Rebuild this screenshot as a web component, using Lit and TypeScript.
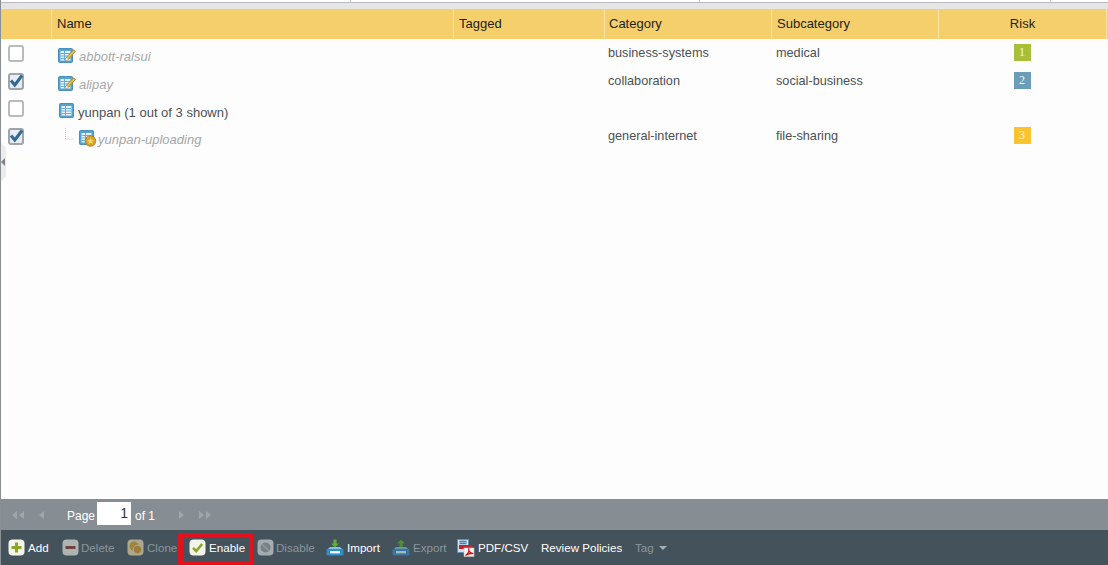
import { LitElement, html, css, svg } from "lit";
import { customElement } from "lit/decorators.js";

const grid = svg`
  <rect x="0.5" y="0.5" width="14" height="14" rx="1" fill="#55a3d3" stroke="#4a8fbc"/>
  <rect x="2.500" y="3" width="10" height="9.500" fill="#e9f4fa"/>
  <path d="M2.500 5.500h10M2.500 8h10M2.500 10.500h10M6.500 3v9.500" stroke="#6aaed8" stroke-width="1"/>`;

const tableIcon = svg`<svg class="ico" width="15" height="15" viewBox="0 0 15 15">${grid}</svg>`;

const editIcon = svg`<svg class="ico" width="18" height="15" viewBox="0 0 18 15">
  ${grid}
  <path d="M15.500 1.800l2 1.600-7.200 8-3 1.300 .8-3z" fill="#e7bd48" stroke="#927327" stroke-width=".7"/>
  <path d="M8.100 9.700l2.200 1.700-3 1.300z" fill="#f6ecd0"/>
</svg>`;

const badgeIcon = svg`<svg class="ico" width="18" height="17" viewBox="0 0 18 17">
  ${grid}
  <circle cx="11.500" cy="11" r="5.300" fill="#d9a128" stroke="#9c7418" stroke-width=".7"/>
  <path d="M11.500 7.600l1 2.300 2.400.2-1.800 1.600.6 2.400-2.200-1.300-2.200 1.300.6-2.400-1.800-1.600 2.400-.2z" fill="#f6d768"/>
</svg>`;

const round = (inner: unknown, dim = false) => svg`<svg class="ico ${dim ? "dim" : ""}" width="17" height="17" viewBox="0 0 17 17">
  <rect x="0.5" y="0.5" width="16" height="16" rx="4" fill="#f4f5ea"/>
  ${inner}
</svg>`;

const addI = round(svg`<path d="M8.500 3.500v10M3.500 8.500h10" stroke="#8aa52c" stroke-width="3"/>`);
const delI = round(svg`<path d="M3.500 8.500h10" stroke="#8f3a34" stroke-width="3"/>`, true);
const cloneI = svg`<svg class="ico dim" width="17" height="17" viewBox="0 0 17 17">
  <rect x="0.5" y="0.5" width="16" height="16" rx="4" fill="#f1e2b4"/>
  <circle cx="7" cy="7" r="4.600" fill="#e0a52c"/><circle cx="10.500" cy="10.500" r="4.200" fill="#d39a26" stroke="#f1e2b4"/>
</svg>`;
const enableI = round(svg`<path d="M4 8.800l3.200 3.200 6-7" fill="none" stroke="#8aa52c" stroke-width="2.600"/>`);
const disableI = svg`<svg class="ico dim" width="17" height="17" viewBox="0 0 17 17">
  <rect x="0.5" y="0.5" width="16" height="16" rx="4" fill="#e6e8e8"/>
  <circle cx="8.500" cy="8.500" r="5" fill="#9aa2a6"/><path d="M5.200 5.200l6.600 6.600" stroke="#c5cacb" stroke-width="1.400"/>
</svg>`;
const ioI = (dim: boolean, up: boolean) => svg`<svg class="ico ${dim ? "dim" : ""}" width="18" height="17" viewBox="0 0 18 17">
  <path d="${up ? "M9 0.500l4 4h-2.400v4H7.400v-4H5z" : "M7.400 0.500h3.200v4H13l-4 4-4-4h2.400z"}" fill="#58b22e"/>
  <path d="M2 10l2-2h10l2 2z" fill="#7fc3e6"/>
  <rect x="0.5" y="10" width="17" height="6.500" rx="1" fill="#2e8fc8"/>
  <rect x="4" y="12" width="10" height="2.400" fill="#f2f7fa"/>
</svg>`;
const pdfI = svg`<svg class="ico" width="18" height="18" viewBox="0 0 18 18">
  <rect x="0.5" y="0.5" width="11" height="13" fill="#cfe0ee" stroke="#5d93bb"/>
  <path d="M2.500 2.500h7M2.500 4.500h7" stroke="#3f86b8" stroke-width="1.300"/>
  <rect x="2" y="6" width="13.500" height="4" fill="#c9232a"/>
  <rect x="7" y="9" width="10" height="8.500" fill="#f6f6f6" stroke="#c4c4c4" stroke-width=".6"/>
  <path d="M8.500 16.500c3-2 4-5 3.300-6.500-.6 1.500 1 4.300 4.500 4.600-2.500-.3-6 .2-7.800 1.900z" fill="none" stroke="#d1181f" stroke-width="1.300"/>
</svg>`;

const arrow = (dir: "l" | "r", double: boolean) => {
  const tri = dir === "l" ? "M6 1v8L1 5z" : "M1 1v8l5-4z";
  return svg`<svg class="ico" width="${double ? 14 : 7}" height="10" viewBox="0 0 ${double ? 14 : 7} 10" fill="#a0a6aa">
    <path d="${tri}"/>${double ? svg`<path transform="translate(7 0)" d="${tri}"/>` : ""}
  </svg>`;
};

const tree = svg`<svg class="ico" width="14" height="14" viewBox="0 0 14 14">
  <path d="M0.500 0v11h9" fill="none" stroke="#c9c9c9" stroke-dasharray="1 1"/>
</svg>`;

type Row = { cls: string; check: boolean; icon: unknown; name: string; dim: boolean; cat?: string; sub?: string; risk?: number };
const rows: Row[] = [
  { cls: "a", check: false, icon: editIcon, name: "abbott-ralsui", dim: true, cat: "business-systems", sub: "medical", risk: 1 },
  { cls: "b", check: true, icon: editIcon, name: "alipay", dim: true, cat: "collaboration", sub: "social-business", risk: 2 },
  { cls: "c", check: false, icon: tableIcon, name: "yunpan (1 out of 3 shown)", dim: false },
  { cls: "d", check: true, icon: badgeIcon, name: "yunpan-uploading", dim: true, cat: "general-internet", sub: "file-sharing", risk: 3 },
];

type Tool = { w: number; icon?: unknown; label: string; off?: boolean; cls?: string };
const tools: Tool[] = [
  { w: 54, icon: addI, label: "Add" },
  { w: 65, icon: delI, label: "Delete", off: true, cls: "tight" },
  { w: 62, icon: cloneI, label: "Clone", off: true },
  { w: 68, icon: enableI, label: "Enable", cls: "hl" },
  { w: 69, icon: disableI, label: "Disable", off: true, cls: "tight" },
  { w: 66, icon: ioI(false, false), label: "Import" },
  { w: 65, icon: ioI(true, true), label: "Export", off: true },
  { w: 84, icon: pdfI, label: "PDF/CSV" },
  { w: 94, label: "Review Policies" },
];

@customElement("app-root")
export class AppRoot extends LitElement {
  static styles = css`
    :host { display: flex; flex-direction: column; height: 100vh; min-height: 565px; overflow: hidden; position: relative;
      font-family: "Liberation Sans", Arial, sans-serif; background: #fdfdfd; border-left: 1px solid #8b9094; box-sizing: border-box; }
    .ico { display: block; flex: none; }
    .ico.dim { opacity: .6; }
    .top { height: 2px; background: #fff; display: grid; grid-template-columns: 350px 349px 351px 1fr; }
    .top i { border-right: 1px solid #c4c4c4; }
    .strip { height: 7px; border-top: 1px solid #b9bcbe; background: #e5e5e5; box-sizing: border-box; }
    .head, .row { display: grid; grid-template-columns: 50px 402px 151px 167px 167px 1fr; }
    .head { height: 30px; background: #f5cf6b; color: #222; font-size: 13px; }
    .head > div { border-left: 1px solid #fbe3a3; padding: 7px 0 0 5px; line-height: 15px; }
    .head > div:first-child { border-left: 0; }
    .head .cat { padding-left: 4px; }
    .head .risk { text-align: center; padding: 7px 0 0; border-right: 1px solid #fbe3a3; margin-right: 1px; }
    .body { flex: 1; }
    .row { font-size: 12.7px; color: #4b5055; line-height: 14px; }
    .row.a { height: 28px; } .row.b { height: 27px; } .row.c { height: 28px; } .row.d { height: 28px; }
    .cb { width: 16px; height: 17px; margin: 6px 0 0 7px; border: 2px solid #b8babc; border-radius: 3px; box-sizing: border-box; background: #fff; position: relative; }
    .cb.on { background: #e6ecf1; border-color: #9ea4a9; }
    .cb svg { position: absolute; left: 0; top: 0; overflow: visible; }
    .nm { display: flex; align-items: flex-start; padding: 9px 0 0 7px; gap: 3px; font-size: 13px; }
    .nm span { font-style: italic; color: #a6a8aa; margin-top: 2px; }
    .c .nm { padding: 9px 0 0 8px; gap: 4px; }
    .c .nm span { font-style: normal; color: #4b5055; margin-top: 3px; }
    .d .nm { padding: 6px 0 0 14px; gap: 0; }
    .d .nm svg:nth-child(2) { margin-top: 2px; }
    .d .nm span { margin-top: 5px; margin-left: 1px; }
    .tx { padding: 7px 0 0 4px; }
    .tx.sub { padding-left: 5px; }
    .rk { display: flex; justify-content: center; padding-top: 5px; padding-right: 2px; }
    .rk b { width: 17px; height: 17px; color: #f3f3e6; font: 400 12px/17px "Liberation Serif", serif; text-align: center; }
    .r1 { background: #a9bf38; } .r2 { background: #6a9db8; } .r3 { background: #fcc42c; }
    .pager { height: 31px; background: #878e93; display: flex; align-items: center; color: #fff; font-size: 12px; }
    .pager .first { margin-left: 10px; } .pager .prev { margin-left: 13px; }
    .pager .lbl { margin-left: 22px; margin-top: 3px; }
    .pager .input { width: 34px; height: 23px; background: #fff; margin: -2px 0 0 2px; color: #333; text-align: right; line-height: 22px; padding-right: 3px; box-sizing: border-box; font-size: 14px; }
    .pager .of { margin-left: 4px; margin-top: 3px; }
    .pager .next { margin-left: 23px; } .pager .last { margin-left: 13px; }
    .bar { height: 35px; background: #44525b; display: flex; align-items: center; padding-left: 7px; color: #fff; font-size: 11.6px; box-sizing: border-box; }
    .t { display: flex; align-items: center; gap: 3px; flex: none; height: 100%; box-sizing: border-box; }
    .t.tight { gap: 2px; }
    .t.off { color: #8b969c; }
    .t.hl { position: relative; }
    .t.hl::after { content: ""; position: absolute; left: -11px; top: 3px; right: 4px; bottom: 0; border: 4px solid #e2111b; border-left-width: 5px; box-sizing: border-box; }
    .tag { display: flex; align-items: center; gap: 5px; color: #8b969c; }
    .tag i { border: 4px solid transparent; border-top-color: #a5aeb3; border-bottom: 0; }
    .handle { position: absolute; left: 0; top: 143px; width: 5px; height: 38px; background: #ececec; clip-path: polygon(0 0, 100% 12%, 100% 88%, 0 100%); }
    .handle::after { content: ""; position: absolute; left: 0; top: 15px; border: 4px solid transparent; border-left: 0; border-right: 4px solid #7d8286; }
  `;

  render() {
    return html`
      <div class="top"><i></i><i></i><i></i><span></span></div>
      <div class="strip"></div>
      <div class="head">
        <div></div><div>Name</div><div>Tagged</div><div class="cat">Category</div><div>Subcategory</div><div class="risk">Risk</div>
      </div>
      <div class="body">
        ${rows.map((r) => html`
          <div class="row ${r.cls}">
            <div class="cb ${r.check ? "on" : ""}">
              ${r.check ? svg`<svg width="13" height="13" viewBox="0 0 13 13"><path d="M1 5.500l3.800 4.500L12 0.500" fill="none" stroke="#2f6a93" stroke-width="3"/></svg>` : ""}
            </div>
            <div class="nm">${r.cls === "d" ? tree : ""}${r.icon}<span>${r.name}</span></div>
            <div></div>
            <div class="tx">${r.cat ?? ""}</div>
            <div class="tx sub">${r.sub ?? ""}</div>
            <div class="rk">${r.risk ? html`<b class="r${r.risk}">${r.risk}</b>` : ""}</div>
          </div>`)}
      </div>
      <div class="pager">
        <span class="first">${arrow("l", true)}</span>
        <span class="prev">${arrow("l", false)}</span>
        <span class="lbl">Page</span>
        <span class="input">1</span>
        <span class="of">of 1</span>
        <span class="next">${arrow("r", false)}</span>
        <span class="last">${arrow("r", true)}</span>
      </div>
      <div class="bar">
        ${tools.map((t) => html`
          <div class="t ${t.off ? "off" : ""} ${t.cls ?? ""}" style="width:${t.w}px">${t.icon ?? ""}<span>${t.label}</span></div>`)}
        <div class="tag">Tag<i></i></div>
      </div>
      <div class="handle"></div>
    `;
  }
}
